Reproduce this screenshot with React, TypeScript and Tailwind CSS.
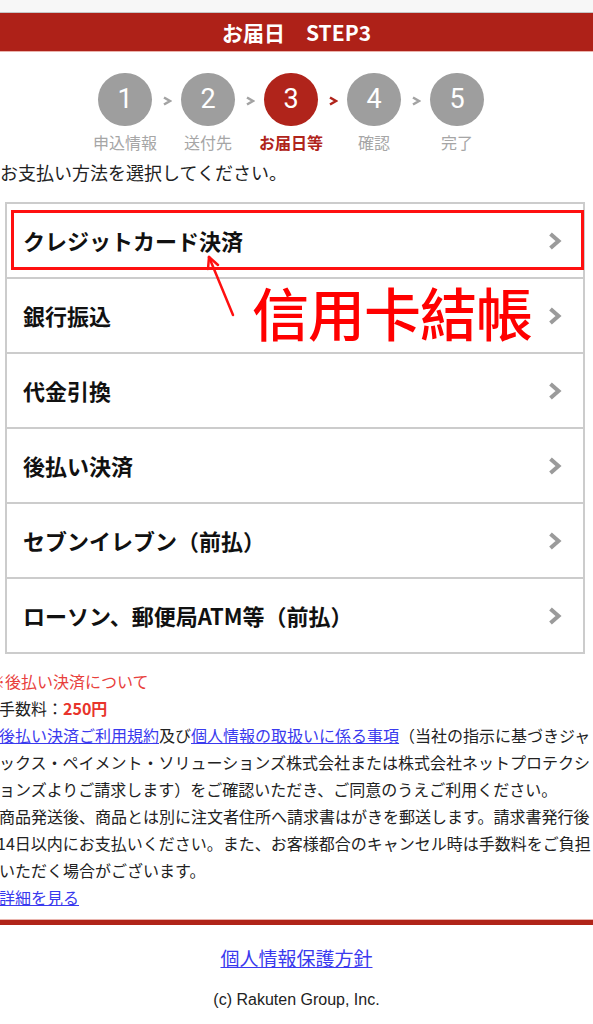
import React from "react";

const steps = [
  { n: "1", label: "申込情報" },
  { n: "2", label: "送付先" },
  { n: "3", label: "お届日等", active: true },
  { n: "4", label: "確認" },
  { n: "5", label: "完了" },
];

const methods = [
  "クレジットカード決済",
  "銀行振込",
  "代金引換",
  "後払い決済",
  "セブンイレブン（前払）",
  "ローソン、郵便局ATM等（前払）",
];

function StepArrow({ red }: { red?: boolean }) {
  return (
    <svg width="10" height="10" viewBox="0 0 10 10" className="mt-[3px]">
      <polyline
        points="2,1.5 8,5 2,8.5"
        fill="none"
        stroke={red ? "#b0241b" : "#a3a3a3"}
        strokeWidth="2.6"
      />
    </svg>
  );
}

function RowChevron() {
  return (
    <svg width="14" height="18" viewBox="0 0 14 18">
      <polyline
        points="2.5,2 10.5,9 2.5,16"
        fill="none"
        stroke="#9b9b9b"
        strokeWidth="4"
      />
    </svg>
  );
}

export default function App() {
  return (
    <div className="relative w-[593px] min-h-[1024px] overflow-hidden bg-white text-[#222] font-['Noto_Sans_CJK_JP',sans-serif]">
      <div className="h-[13px] bg-[#f7f7f7] border-b border-[#c6c6c6]" />
      <header className="h-[39px] bg-[#ae2118] border-b border-[#eab3ac] flex items-center justify-center text-white font-bold text-[21px] leading-none">
        お届日　STEP3
      </header>

      {/* steps */}
      <div className="mt-[21px] ml-[98px] flex items-start">
        {steps.map((s, i) => (
          <React.Fragment key={s.n}>
            <div className="w-[54px] flex flex-col items-center">
              <div
                className={
                  s.active
                    ? "w-[54px] h-[53px] rounded-full bg-[#b0241b] flex items-center justify-center text-white text-[27px] font-['Roboto',sans-serif]"
                    : "w-[54px] h-[53px] rounded-full bg-[#9e9e9e] flex items-center justify-center text-white text-[27px] font-['Roboto',sans-serif]"
                }
              >
                {s.n}
              </div>
              <span
                className={
                  s.active
                    ? "mt-[7px] text-[16px] leading-[18px] whitespace-nowrap font-bold text-[#b0241b]"
                    : "mt-[7px] text-[16px] leading-[18px] whitespace-nowrap text-[#a6a6a6]"
                }
              >
                {s.label}
              </span>
            </div>
            {i < steps.length - 1 && (
              <div className="w-[29px] h-[53px] flex items-center justify-center">
                <StepArrow red={s.active} />
              </div>
            )}
          </React.Fragment>
        ))}
      </div>

      <p className="mt-[10px] text-[18px] leading-[22px] whitespace-nowrap">
        お支払い方法を選択してください。
      </p>

      {/* payment list */}
      <div className="relative mt-[19px] ml-[5px] w-[580px] border-2 border-[#cccccc]">
        {methods.map((m, i) => (
          <div
            key={m}
            className={
              i === 0
                ? "relative h-[73px] flex items-center justify-between pl-[16px] pr-[21px]"
                : "h-[75px] flex items-center justify-between pl-[16px] pr-[21px] border-t-2 border-[#cccccc]"
            }
          >
            <span className="text-[22px] font-bold text-[#111] whitespace-nowrap">{m}</span>
            <RowChevron />
            {i === 0 && (
              <div className="absolute top-[6px] left-[4px] right-[-1px] h-[60px] border-[3px] border-[#ff1010]" />
            )}
          </div>
        ))}

        {/* annotation */}
        <svg
          width="40"
          height="70"
          viewBox="0 0 40 70"
          className="absolute left-[193px] top-[46px]"
        >
          <g stroke="#ff1010" strokeWidth="2.5" fill="none" strokeLinecap="round">
            <line x1="33" y1="65" x2="9" y2="7" />
            <line x1="9" y1="7" x2="8" y2="19" />
            <line x1="9" y1="7" x2="18" y2="15" />
          </g>
        </svg>
        <span className="absolute left-[245px] top-[79px] text-[57px] leading-none tracking-[-1px] font-medium text-[#ff0000] whitespace-nowrap font-['Noto_Sans_CJK_TC','Noto_Sans_CJK_JP',sans-serif]">
          信用卡結帳
        </span>
      </div>

      {/* notes */}
      <div className="mt-[14px] text-[16px] leading-[27px] whitespace-nowrap">
        <p className="ml-[-11px] text-[#e8403c]">※後払い決済について</p>
        <p className="ml-[-1px]">
          手数料：<span className="font-bold text-[#e8342c]">250円</span>
        </p>
        <p className="ml-[-1px]">
          <a className="text-[#3a3aee] underline">後払い決済ご利用規約</a>及び
          <a className="text-[#3a3aee] underline">個人情報の取扱いに係る事項</a>（当社の指示に基づきジャ
        </p>
        <p className="ml-[-1px]">ックス・ペイメント・ソリューションズ株式会社または株式会社ネットプロテクシ</p>
        <p className="ml-[-1px]">ョンズよりご請求します）をご確認いただき、ご同意のうえご利用ください。</p>
        <p className="ml-[-1px]">商品発送後、商品とは別に注文者住所へ請求書はがきを郵送します。請求書発行後</p>
        <p className="ml-[-3px]">14日以内にお支払いください。また、お客様都合のキャンセル時は手数料をご負担</p>
        <p className="ml-[-1px]">いただく場合がございます。</p>
        <p className="ml-[-1px]">
          <a className="text-[#3a3aee] underline">詳細を見る</a>
        </p>
      </div>

      {/* footer */}
      <div className="mt-[8px] h-[1px] bg-[#e9b4ad]" />
      <div className="h-[5px] bg-[#b02419]" />
      <div className="mt-[21px] text-center text-[19px] leading-[24px]">
        <a className="text-[#3a3aee] underline">個人情報保護方針</a>
      </div>
      <p className="mt-[21px] text-center text-[16px] leading-[18px] text-[#222] font-['Liberation_Sans',Arial,sans-serif]">
        (c) Rakuten Group, Inc.
      </p>
    </div>
  );
}
